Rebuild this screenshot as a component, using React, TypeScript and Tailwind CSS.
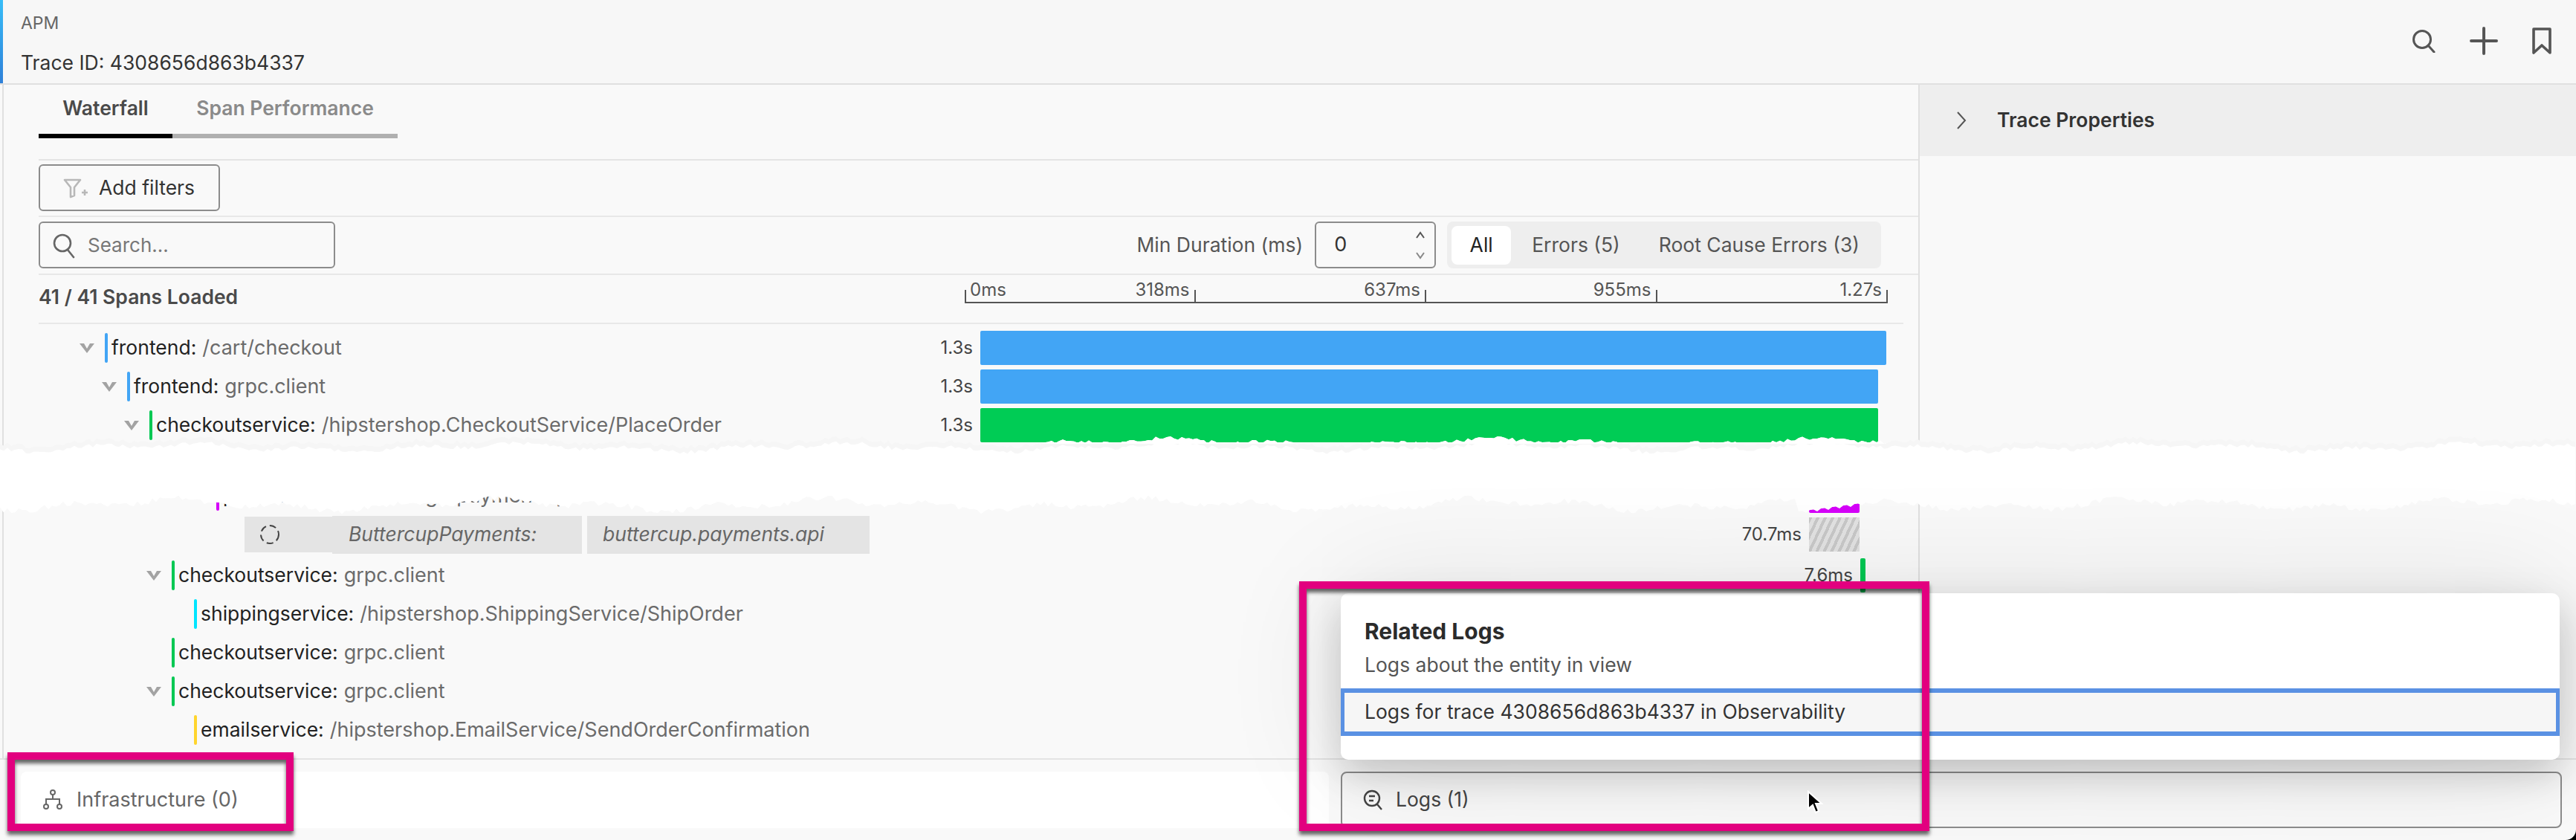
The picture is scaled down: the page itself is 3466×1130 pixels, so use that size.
import React from "react";

function rng(seed: number) {
  let s = seed;
  return () => {
    s = (s * 1664525 + 1013904223) % 4294967296;
    return s / 4294967296;
  };
}

function jag(seed: number, lo: number, hi: number): [number, number][] {
  const r = rng(seed);
  const pts: [number, number][] = [];
  const mid = (lo + hi) / 2;
  const amp = (hi - lo) / 2;
  const p1 = r() * 6;
  const p2 = r() * 6;
  for (let x = 0; x <= 3466; x += 5) {
    const v =
      0.4 * Math.sin(x / 71 + p1) + 0.3 * Math.sin(x / 23 + p2) + 0.3 * (r() * 2 - 1);
    pts.push([x, Math.round((mid + v * amp) * 10) / 10]);
  }
  return pts;
}

const topGrey = jag(7, 586, 604);
const topWhite = topGrey.map(([x, y]) => [x, y + 7] as [number, number]);
// The tear only just uncovers the top of the magenta bar, rising to the right.
const bottom = jag(31, 666, 692).map(([x, y]) =>
  x >= 2420 && x <= 2510
    ? ([x, 689 - ((x - 2420) / 90) * 12 + (x % 15 === 0 ? 2 : -1)] as [number, number])
    : ([x, y] as [number, number])
);
const line = (p: [number, number][]) => p.map(([x, y]) => `L${x} ${y}`).join(" ");
const rev = (p: [number, number][]) => [...p].reverse();
const greyPath = `M0 ${topGrey[0][1]} ${line(topGrey)} ${line(rev(bottom))} Z`;
const bandPath = `M0 ${topWhite[0][1]} ${line(topWhite)} ${line(rev(bottom))} Z`;

function Chevron() {
  return (
    <svg width="20" height="14" viewBox="0 0 20 14" className="shrink-0">
      <path d="M0 1 L6 1 L10 8 L14 1 L20 1 L10 14 Z" fill="#a3a3a3" />
    </svg>
  );
}

type Row = {
  depth: number;
  chevron?: boolean;
  color: string;
  service: string;
  op: string;
  dur: string;
  end: number;
  w: number;
  barClass: string;
};

const indents = ["pl-[104px]", "pl-[134px]", "pl-[164px]", "pl-[194px]", "pl-[224px]", "pl-[254px]"];

function SpanRow({ depth, chevron, color, service, op, dur, end, w, barClass }: Row) {
  return (
    <div className="flex h-[52px] items-center">
      <div className={`flex w-[1195px] shrink-0 items-center gap-[16px] ${indents[depth]}`}>
        <div className="flex w-[16px] shrink-0 justify-center">{chevron ? <Chevron /> : null}</div>
        <div className="flex items-center gap-[5px] whitespace-nowrap">
          <div className={`h-[40px] w-[4px] rounded-[2px] ${color}`} />
          <span className="text-[26.5px] text-[#222222]">{service}:</span>
          <span className="ml-[3px] text-[27px] text-[#6b6b6b]">{op}</span>
        </div>
      </div>
      <div className="flex items-center justify-end gap-[10px]" style={{ width: end - 1200 }}>
        <span className="text-[24px] whitespace-nowrap text-[#444444]">{dur}</span>
        <div className={`h-[46px] shrink-0 rounded-[2px] ${barClass}`} style={{ width: w }} />
      </div>
    </div>
  );
}

const Segment = ({ left, right }: { left?: string; right?: string }) => (
  <div className="flex h-full flex-1 justify-between">
    {left ? (
      <div className="flex items-end">
        <div className="h-[16px] w-[2px] bg-[#555555]" />
        <span className="ml-[5px] self-start text-[24px] leading-[30px] text-[#555555]">{left}</span>
      </div>
    ) : (
      <div />
    )}
    <div className="flex items-end">
      <span className="mr-[6px] self-start text-[24px] leading-[30px] text-[#555555]">{right}</span>
      <div className="h-[16px] w-[2px] bg-[#555555]" />
    </div>
  </div>
);

export default function App() {
  return (
    <div className="relative flex h-[1130px] w-[3466px] flex-col overflow-hidden bg-[#f9f9f9] font-['Inter','Liberation_Sans',sans-serif]">
      {/* header */}
      <header className="flex h-[114px] shrink-0 border-b-2 border-[#e0e0e0] bg-[#f7f7f7]">
        <div className="w-[4px] bg-gradient-to-b from-[#38bdf8] to-[#2f80d8]" />
        <div className="flex flex-1 flex-col pl-[24px]">
          <span className="mt-[16px] text-[23px] leading-[30px] text-[#666666]">APM</span>
          <span className="mt-[21px] text-[26.5px] leading-[34px] text-[#333333]">Trace ID: 4308656d863b4337</span>
        </div>
        <div className="flex items-center gap-[46px] pr-[33px] pb-[2px]">
          <svg width="32" height="32" viewBox="0 0 32 32" fill="none" stroke="#555" strokeWidth="3">
            <circle cx="14" cy="14" r="11.5" />
            <path d="M22 22 L30 31" strokeLinecap="round" />
          </svg>
          <svg width="38" height="38" viewBox="0 0 38 38" fill="none" stroke="#555" strokeWidth="4">
            <path d="M19 2 V36 M2 19 H36" strokeLinecap="round" />
          </svg>
          <svg width="26" height="36" viewBox="0 0 26 36" fill="none" stroke="#555" strokeWidth="3.6">
            <path d="M2 2 H24 V34 L13 24 L2 34 Z" strokeLinejoin="round" />
          </svg>
        </div>
      </header>

      {/* main */}
      <div className="flex h-[906px] shrink-0">
        <div className="ml-[3px] flex w-[2580px] shrink-0 flex-col border-r-2 border-l-2 border-[#e0e0e0]">
          <div className="ml-[47px] flex h-[102px] shrink-0 flex-col border-b-2 border-[#e4e4e4]">
            <div className="flex h-[72px] items-end">
              <div className="flex h-[72px] w-[180px] flex-col items-center justify-end border-b-[6px] border-black">
                <span className="pb-[14px] text-[26.5px] font-semibold text-[#4a4a4a]">Waterfall</span>
              </div>
              <div className="flex h-[72px] w-[303px] flex-col items-center justify-end border-b-[6px] border-[#b0b0b0]">
                <span className="pb-[14px] text-[26.5px] font-semibold text-[#8a8a8a]">Span Performance</span>
              </div>
            </div>
          </div>
          <div className="ml-[47px] flex h-[76px] shrink-0 items-start border-b-2 border-[#e8e8e8] pt-[5px]">
            <button className="flex h-[63px] w-[244px] items-center rounded-[6px] border-2 border-[#8c8c8c] pl-[31px]">
              <svg width="34" height="28" viewBox="0 0 34 28" fill="none" stroke="#b8b8b8" strokeWidth="2.6">
                <path d="M2 3 H23 L15 13 V24 L10 26 V13 Z" strokeLinejoin="round" />
                <path d="M25 20 H33 M29 16 V24" />
              </svg>
              <span className="ml-[14px] text-[26.5px] text-[#333333]">Add filters</span>
            </button>
          </div>
          <div className="ml-[47px] flex h-[78px] shrink-0 items-start border-b-2 border-[#e8e8e8] pt-[6px]">
            <div className="flex h-[63px] w-[399px] items-center rounded-[6px] border-2 border-[#8c8c8c] pl-[16px]">
              <svg width="32" height="36" viewBox="0 0 32 36" fill="none" stroke="#666" strokeWidth="2.6">
                <circle cx="14" cy="15" r="11" />
                <path d="M21 24 L29 34" strokeLinecap="round" />
              </svg>
              <span className="ml-[16px] text-[26px] text-[#777777]">Search...</span>
            </div>
            <div className="ml-auto flex items-center">
              <span className="text-[26.5px] text-[#555555]">Min Duration (ms)</span>
              <div className="ml-[16px] flex h-[63px] w-[163px] items-center justify-between rounded-[6px] border-2 border-[#8c8c8c] pl-[24px] pr-[12px]">
                <span className="text-[27px] text-[#333333]">0</span>
                <div className="flex flex-col gap-[12px]">
                  <svg width="14" height="14" viewBox="0 0 14 14" fill="none" stroke="#555" strokeWidth="2"><path d="M2 10 L7 3 L12 10" /></svg>
                  <svg width="14" height="14" viewBox="0 0 14 14" fill="none" stroke="#888" strokeWidth="2"><path d="M2 4 L7 11 L12 4" /></svg>
                </div>
              </div>
              <div className="ml-[15px] mr-[50px] flex h-[63px] items-center rounded-[8px] bg-[#eeeeee] pl-[6px] pr-[29px] text-[26.5px] text-[#555555]">
                <span className="flex h-[52px] w-[80px] items-center justify-center rounded-[8px] bg-white text-[#222222]">All</span>
                <span className="ml-[28px]">Errors (5)</span>
                <span className="ml-[52px]">Root Cause Errors (3)</span>
              </div>
            </div>
          </div>
          <div className="ml-[47px] mr-[20px] flex h-[66px] shrink-0 border-b-2 border-[#e8e8e8]">
            <span className="mt-[10px] text-[26.5px] font-semibold text-[#4a4a4a]">41 / 41 Spans Loaded</span>
            <div className="ml-auto mr-[21px] mt-[5px] flex h-[33px] w-[1242px] border-b-2 border-[#555555]">
              <Segment left="0ms" right="318ms" />
              <Segment right="637ms" />
              <Segment right="955ms" />
              <Segment right="1.27s" />
            </div>
          </div>

          {/* rows */}
          <div className="mt-[6px] flex flex-col">
            <SpanRow depth={0} chevron color="bg-[#42a5f5]" service="frontend" op="/cart/checkout" dur="1.3s" end={2538} w={1219} barClass="bg-[#42a5f5]" />
            <SpanRow depth={1} chevron color="bg-[#42a5f5]" service="frontend" op="grpc.client" dur="1.3s" end={2527} w={1208} barClass="bg-[#42a5f5]" />
            <SpanRow depth={2} chevron color="bg-[#00c853]" service="checkoutservice" op="/hipstershop.CheckoutService/PlaceOrder" dur="1.3s" end={2527} w={1208} barClass="bg-[#00cc55]" />
            <div className="h-[43px]" />
            <SpanRow depth={5} color="bg-[#d500f9]" service="paymentservice" op="charge/payment.api" dur="" end={2502} w={68} barClass="bg-[#d500f9]" />
            <div className="flex h-[52px] items-center">
              <div className="flex w-[1195px] shrink-0 items-center pl-[324px]">
                <div className="flex h-[48px] w-[118px] items-center bg-[#e4e4e4] pl-[20px]">
                  <svg width="28" height="28" viewBox="0 0 28 28" fill="none" stroke="#444" strokeWidth="2" strokeDasharray="9 5">
                    <circle cx="14" cy="14" r="12" />
                  </svg>
                </div>
                <div className="flex h-[51px] w-[336px] items-center bg-[#e4e4e4] pl-[22px]">
                  <span className="text-[26.5px] italic text-[#666666]">ButtercupPayments:</span>
                </div>
                <div className="ml-[7px] flex h-[51px] w-[380px] items-center bg-[#e4e4e4] pl-[21px]">
                  <span className="text-[26.5px] italic text-[#666666]">buttercup.payments.api</span>
                </div>
              </div>
              <div className="flex items-center justify-end gap-[10px]" style={{ width: 2502 - 1200 }}>
                <span className="text-[24px] text-[#444444]">70.7ms</span>
                <div className="h-[46px] w-[68px] shrink-0 bg-[repeating-linear-gradient(115deg,#c8c8c8_0px,#c8c8c8_4px,#e2e2e2_4px,#e2e2e2_9px)]" />
              </div>
            </div>
            <div className="h-[3px]" />
            <SpanRow depth={3} chevron color="bg-[#00c853]" service="checkoutservice" op="grpc.client" dur="7.6ms" end={2510} w={7} barClass="bg-[#00c853]" />
            <SpanRow depth={4} color="bg-[#00e5ff]" service="shippingservice" op="/hipstershop.ShippingService/ShipOrder" dur="" end={2510} w={0} barClass="" />
            <SpanRow depth={3} color="bg-[#00c853]" service="checkoutservice" op="grpc.client" dur="" end={2510} w={0} barClass="" />
            <SpanRow depth={3} chevron color="bg-[#00c853]" service="checkoutservice" op="grpc.client" dur="" end={2510} w={0} barClass="" />
            <SpanRow depth={4} color="bg-[#ffd52e]" service="emailservice" op="/hipstershop.EmailService/SendOrderConfirmation" dur="" end={2510} w={0} barClass="" />
          </div>
        </div>

        {/* right panel */}
        <div className="flex-1">
          <div className="flex h-[96px] items-center bg-[#eeeeee] pl-[49px]">
            <svg width="14" height="24" viewBox="0 0 14 24" fill="none" stroke="#555" strokeWidth="2">
              <path d="M2 1 L12 12 L2 23" />
            </svg>
            <span className="ml-[41px] text-[26.5px] font-semibold text-[#333333]">Trace Properties</span>
          </div>
        </div>
      </div>

      {/* footer */}
      <footer className="flex h-[110px] shrink-0 gap-[16px] border-t-2 border-[#e4e4e4] pl-[28px] pr-[19px] pt-[16px]">
        <div className="flex h-[76px] w-[1760px] items-center rounded-[8px] bg-white pl-[30px] text-[27px] text-[#666666]">
          <svg width="26" height="28" viewBox="0 0 26 28" fill="none" stroke="#666" strokeWidth="2">
            <circle cx="13" cy="4" r="3" />
            <path d="M13 7 V13 M4 20 V13 H22 V20" />
            <circle cx="4" cy="23" r="3" />
            <circle cx="22" cy="23" r="3" />
          </svg>
          <span className="ml-[19px]">Infrastructure (0)</span>
        </div>
        <div className="flex h-[76px] flex-1 items-center rounded-[8px] border-2 border-[#8c8c8c] pl-[28px] text-[26.5px] text-[#444444]">
          <svg width="26" height="28" viewBox="0 0 26 28" fill="none" stroke="#444" strokeWidth="2.4">
            <circle cx="12" cy="12" r="10" />
            <path d="M19 20 L25 27 M8 9 H16 M8 15 H14" />
          </svg>
          <span className="ml-[18px]">Logs (1)</span>
        </div>
      </footer>

      {/* torn edge */}
      <svg className="pointer-events-none absolute top-0 left-0" width="3466" height="1130" viewBox="0 0 3466 1130">
        <defs>
          <clipPath id="torn"><path d={greyPath} /></clipPath>
        </defs>
        <path d={greyPath} fill="#f6f6f6" />
        <rect x="1319" y="580" width="1219" height="17" fill="#ffffff" clipPath="url(#torn)" />
        <path d={bandPath} fill="#ffffff" />
      </svg>

      {/* popup */}
      <div className="absolute top-[798px] left-[1804px] h-[224px] w-[1640px] rounded-[10px] bg-white pt-[32px] shadow-[0_20px_50px_rgba(0,0,0,0.18),0_0_160px_rgba(0,0,0,0.12)]">
        <div className="pl-[32px] text-[30px] leading-[38px] font-bold text-[#2b2b2b]">Related Logs</div>
        <div className="mt-[7px] pl-[32px] text-[26.5px] leading-[38px] text-[#555555]">Logs about the entity in view</div>
        <div className="mt-[13px] flex h-[64px] items-center border-x-[5px] border-y-[6px] border-[#5a91e3] bg-[#f6f6f6] pl-[27px] text-[26.5px] text-[#333333]">
          Logs for trace 4308656d863b4337 in Observability
        </div>
      </div>

      {/* annotation frames */}
      <div className="absolute top-[1012px] left-[10px] h-[106px] w-[385px] border-[10px] border-[#e2007f] shadow-[0_5px_5px_rgba(0,0,0,0.6),inset_0_5px_5px_rgba(0,0,0,0.6)]" />
      <div className="absolute top-[782px] left-[1748px] h-[336px] w-[848px] border-[10px] border-[#e2007f] shadow-[0_5px_5px_rgba(0,0,0,0.6),inset_0_5px_5px_rgba(0,0,0,0.6)]" />

      {/* cursor */}
      <svg className="absolute top-[1063px] left-[2431px]" width="24" height="34" viewBox="0 0 24 34">
        <path d="M2 2 L2 25 L8 20 L12 30 L16 28 L12 18 L20 18 Z" fill="#000" stroke="#fff" strokeWidth="2" />
      </svg>

      {/* window corner */}
      <svg className="absolute right-0 bottom-0" width="14" height="14" viewBox="0 0 14 14">
        <path d="M14 0 A14 14 0 0 1 0 14 L14 14 Z" fill="#000" />
      </svg>
    </div>
  );
}
